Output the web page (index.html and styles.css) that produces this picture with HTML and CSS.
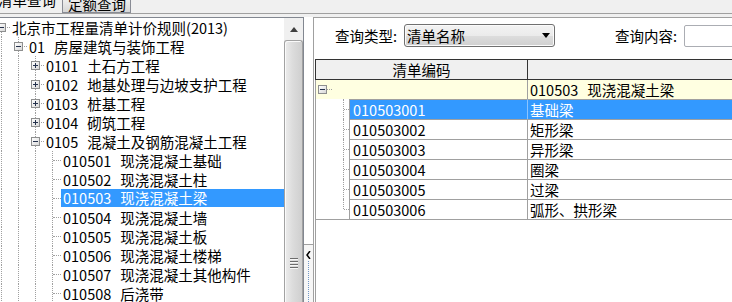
FILE: index.html
```html
<!DOCTYPE html>
<html lang="zh-CN">
<head>
  <meta charset="UTF-8" />
  <title>清单查询</title>
  <link rel="stylesheet" href="styles.css">
</head>
<body>
  <div class="tabs">
    <div class="tab active">清单查询</div>
    <div class="tab other">定额查询</div>
  </div>

  <div class="main">
    <div class="left">
      <div class="tree">
        <div class="trow"><span class="node root"><i class="box"></i></span><span class="label">北京市工程量清单计价规则(2013)</span></div>
        <div class="trow"><i class="guide"></i><span class="node"><i class="box"></i></span><span class="label"><span class="code">01</span>房屋建筑与装饰工程</span></div>
        <div class="trow"><i class="guide"></i><i class="guide"></i><span class="node"><i class="box plus"></i></span><span class="label"><span class="code">0101</span>土石方工程</span></div>
        <div class="trow"><i class="guide"></i><i class="guide"></i><span class="node"><i class="box plus"></i></span><span class="label"><span class="code">0102</span>地基处理与边坡支护工程</span></div>
        <div class="trow"><i class="guide"></i><i class="guide"></i><span class="node"><i class="box plus"></i></span><span class="label"><span class="code">0103</span>桩基工程</span></div>
        <div class="trow"><i class="guide"></i><i class="guide"></i><span class="node"><i class="box plus"></i></span><span class="label"><span class="code">0104</span>砌筑工程</span></div>
        <div class="trow"><i class="guide"></i><i class="guide"></i><span class="node"><i class="box"></i></span><span class="label"><span class="code">0105</span>混凝土及钢筋混凝土工程</span></div>
        <div class="trow"><i class="guide"></i><i class="guide"></i><i class="guide"></i><span class="node"></span><span class="label"><span class="code">010501</span>现浇混凝土基础</span></div>
        <div class="trow"><i class="guide"></i><i class="guide"></i><i class="guide"></i><span class="node"></span><span class="label"><span class="code">010502</span>现浇混凝土柱</span></div>
        <div class="trow sel"><i class="guide"></i><i class="guide"></i><i class="guide"></i><span class="node"></span><span class="label"><span class="code">010503</span>现浇混凝土梁</span></div>
        <div class="trow"><i class="guide"></i><i class="guide"></i><i class="guide"></i><span class="node"></span><span class="label"><span class="code">010504</span>现浇混凝土墙</span></div>
        <div class="trow"><i class="guide"></i><i class="guide"></i><i class="guide"></i><span class="node"></span><span class="label"><span class="code">010505</span>现浇混凝土板</span></div>
        <div class="trow"><i class="guide"></i><i class="guide"></i><i class="guide"></i><span class="node"></span><span class="label"><span class="code">010506</span>现浇混凝土楼梯</span></div>
        <div class="trow"><i class="guide"></i><i class="guide"></i><i class="guide"></i><span class="node"></span><span class="label"><span class="code">010507</span>现浇混凝土其他构件</span></div>
        <div class="trow"><i class="guide"></i><i class="guide"></i><i class="guide"></i><span class="node"></span><span class="label"><span class="code">010508</span>后浇带</span></div>
      </div>
      <div class="vscroll">
        <div class="sbtn">
          <svg width="8" height="5" viewBox="0 0 8 5"><polygon points="0,5 8,5 4,0" fill="#404040"/></svg>
        </div>
        <div class="thumb">
          <div class="grip"><i></i><i></i><i></i><i></i></div>
        </div>
      </div>
    </div>

    <div class="splitter">
      <div class="splitfill"></div>
      <div class="splitbtn">
        <svg width="5" height="8" viewBox="0 0 5 8"><polyline points="4,0 1,4 4,8" fill="none" stroke="#000" stroke-width="1.5"/></svg>
        <div class="dots"></div>
      </div>
    </div>

    <div class="right">
      <div class="query">
        <span class="qlabel">查询类型:</span>
        <div class="combo">
          <span class="combo-text">清单名称</span>
          <svg width="8" height="5" viewBox="0 0 8 5"><polygon points="0,0 8,0 4,5" fill="#000"/></svg>
        </div>
        <span class="qlabel qlabel2">查询内容:</span>
        <div class="qinput"></div>
      </div>

      <div class="grid">
        <div class="ghead">
          <div class="hc1">清单编码</div>
          <div class="hc2"></div>
        </div>
        <div class="grow">
          <div class="gi"><i class="box"></i></div>
          <div class="gc1"></div>
          <div class="gc2"><span class="code">010503</span>现浇混凝土梁</div>
        </div>
        <div class="brow sel"><div class="bi"></div><div class="bc1">010503001</div><div class="bc2">基础梁</div></div>
        <div class="brow"><div class="bi"></div><div class="bc1">010503002</div><div class="bc2">矩形梁</div></div>
        <div class="brow"><div class="bi"></div><div class="bc1">010503003</div><div class="bc2">异形梁</div></div>
        <div class="brow"><div class="bi"></div><div class="bc1">010503004</div><div class="bc2">圈梁</div></div>
        <div class="brow"><div class="bi"></div><div class="bc1">010503005</div><div class="bc2">过梁</div></div>
        <div class="brow last"><div class="bi"></div><div class="bc1">010503006</div><div class="bc2">弧形、拱形梁</div></div>
        <div class="gend"></div>
      </div>
    </div>
  </div>
</body>
</html>
```

FILE: styles.css
```css
body {
  margin: 0;
  width: 732px;
  height: 302px;
  overflow: hidden;
  background: #f0f0f0;
  font-family: "Noto Sans CJK SC", "Liberation Sans", sans-serif;
  font-size: 14.5px;
  color: #000;
}

/* tabs */
.tabs {
  height: 13px;
  display: flex;
  align-items: flex-end;
  border-bottom: 1px solid #a0a0a0;
  overflow: hidden;
}
.tab {
  line-height: 16px;
  white-space: nowrap;
  flex: none;
}
.tab.active {
  width: 64px;
  margin-left: -3px;
  padding-left: 1px;
  margin-bottom: 5px;
}
.tab.other {
  padding: 0 4px 0 5px;
  border: 1px solid #898c95;
  background: linear-gradient(#f4f4f4, #e6e6e6 50%, #d7d7d7);
}

.main {
  display: flex;
  margin-top: 3px;
  height: 285px;
}

/* left tree panel */
.left {
  flex: none;
  width: 303px;
  display: flex;
  background: #fff;
  border-top: 1px solid #828790;
  border-right: 1px solid #828790;
}
.tree {
  flex: none;
  width: 284px;
  overflow: hidden;
}
.trow {
  display: flex;
  height: 19px;
  line-height: 19px;
  margin-left: -7px;
  white-space: nowrap;
}
.guide, .node {
  flex: none;
  width: 17px;
  position: relative;
}
.guide::before, .node::before {
  content: "";
  position: absolute;
  left: 8px;
  top: 0;
  bottom: 0;
  border-left: 1px dotted #a0a0a0;
}
.node.root::before {
  top: 9px;
}
.node {
  display: flex;
  align-items: center;
}
.node::after {
  content: "";
  position: absolute;
  left: 9px;
  right: 0;
  top: 9px;
  border-top: 1px dotted #a0a0a0;
}
.box {
  position: relative;
  z-index: 1;
  display: block;
  margin-left: 4px;
  width: 9px;
  height: 9px;
  box-sizing: border-box;
  border: 1px solid #8e8f8f;
  background: linear-gradient(135deg, #ffffff, #d8d8d8);
}
.box::before {
  content: "";
  position: absolute;
  left: 1px;
  top: 3px;
  width: 5px;
  height: 1px;
  background: #25324d;
}
.box.plus::after {
  content: "";
  position: absolute;
  left: 3px;
  top: 1px;
  width: 1px;
  height: 5px;
  background: #25324d;
}
.label {
  margin-left: 2px;
}
.code {
  margin-right: 9px;
}
.trow.sel .label {
  flex: 1;
  margin-left: 0;
  padding-left: 2px;
  height: 18px;
  line-height: 18px;
  background: #3399ff;
  color: #fff;
}

/* scrollbar */
.vscroll {
  flex: none;
  width: 19px;
  display: flex;
  flex-direction: column;
  background: #ebebeb;
}
.sbtn {
  height: 22px;
  display: flex;
  align-items: center;
  justify-content: center;
  background: #f0f0f0;
}
.thumb {
  flex: 1;
  box-sizing: border-box;
  border: 1px solid #a2a2a2;
  border-bottom: none;
  border-radius: 3px 3px 0 0;
  box-shadow: inset 1px 1px 0 #fafafa;
  background: linear-gradient(to right, #ececec, #dcdcdc 45%, #cfcfcf);
  padding-top: 217px;
}
.grip {
  width: 8px;
  margin: 0 auto;
}
.grip i {
  display: block;
  height: 1px;
  background: #6d6d6d;
  border-bottom: 1px solid #f7f7f7;
  margin-bottom: 1px;
}

/* splitter */
.splitter {
  flex: none;
  width: 9px;
  display: flex;
  flex-direction: column;
  background: #fff;
}
.splitfill {
  flex: 1;
}
.splitbtn {
  height: 58px;
  border-top: 1px solid #a0a0a0;
  background: #f6f6f6;
  display: flex;
  flex-direction: column;
  align-items: center;
  padding-top: 6px;
  box-sizing: border-box;
}
.dots {
  flex: 1;
  margin-top: 2px;
  border-left: 1px dotted #6f95c4;
}

/* right panel */
.right {
  flex: 1;
  min-width: 0;
  display: flex;
  flex-direction: column;
  overflow: hidden;
  background: #fff;
  border-top: 1px solid #a0a0a0;
  border-left: 1px solid #a0a0a0;
}
.query {
  display: flex;
  align-items: center;
  height: 23px;
  margin-top: 6px;
  padding-left: 21px;
  white-space: nowrap;
}
.qlabel {
  flex: none;
  width: 69px;
}
.qlabel2 {
  margin-left: 60px;
}
.combo {
  flex: none;
  width: 151px;
  height: 23px;
  box-sizing: border-box;
  display: flex;
  align-items: center;
  padding-left: 2px;
  border: 1px solid #707070;
  border-radius: 3px;
  box-shadow: inset 0 0 0 1px #fbfbfb;
  background: linear-gradient(#f3f3f3, #ebebeb 50%, #dddddd 51%, #d0d0d0);
}
.combo-text {
  flex: 1;
}
.combo svg {
  margin-right: 4px;
}
.qinput {
  flex: none;
  width: 100px;
  height: 22px;
  box-sizing: border-box;
  margin-top: 1px;
  border: 1px solid #abadb3;
  border-radius: 2px;
  background: #fff;
}

/* grid */
.grid {
  flex: 1;
  width: 440px;
  margin: 12px 0 0 1px;
  border-left: 1px solid #a0a0a0;
  line-height: 19px;
  white-space: nowrap;
}
.ghead {
  display: flex;
  height: 19px;
  margin-left: -1px;
  border: 1px solid #333;
  border-right: none;
  background: #f0f0f0;
}
.hc1 {
  width: 211px;
  text-align: center;
}
.hc2 {
  flex: 1;
  border-left: 1px solid #333;
}
.grow {
  display: flex;
  height: 19px;
  background: #ffffe1;
}
.gi {
  width: 33px;
  display: flex;
  align-items: center;
  position: relative;
}
.gi .box {
  margin-left: 2px;
}
.gi::after {
  content: "";
  position: absolute;
  left: 11px;
  width: 5px;
  top: 9px;
  border-top: 1px dotted #a0a0a0;
}
.gc1 {
  width: 178px;
}
.gc2 {
  flex: 1;
  border-left: 1px solid #a0a0a0;
  padding-left: 2px;
}
.brow {
  display: flex;
  height: 20px;
}
.bi {
  width: 33px;
  position: relative;
}
.bi::before {
  content: "";
  position: absolute;
  left: 27px;
  top: 0;
  bottom: 0;
  border-left: 1px dotted #a0a0a0;
}
.brow.last .bi::before {
  bottom: 10px;
}
.bi::after {
  content: "";
  position: absolute;
  left: 28px;
  right: 0;
  top: 10px;
  border-top: 1px dotted #a0a0a0;
}
.bc1, .bc2 {
  border-top: 1px solid #a0a0a0;
  border-left: 1px solid #a0a0a0;
}
.bc1 {
  width: 178px;
  box-sizing: border-box;
  padding-left: 3px;
}
.bc2 {
  flex: 1;
  padding-left: 2px;
}
.brow.sel .bc1, .brow.sel .bc2 {
  background: #3399ff;
  color: #fff;
}
.brow.sel .bc2 {
  border-left-color: #8cc4ff;
}
.gend {
  border-top: 1px solid #a0a0a0;
}
```
